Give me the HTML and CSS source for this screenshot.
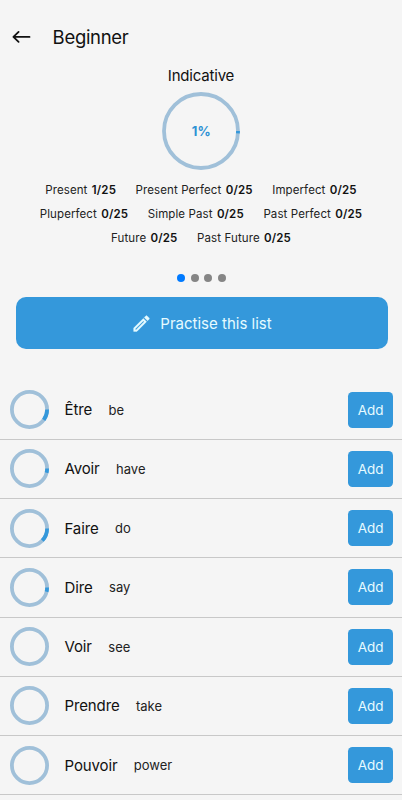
FILE: index.html
```html
<!DOCTYPE html>
<html lang="en">
<head>
<meta charset="utf-8">
<meta name="viewport" content="width=device-width, initial-scale=1">
<title>Beginner</title>
<link rel="stylesheet" href="styles.css">
</head>
<body>
<div class="screen">
  <header class="header">
    <svg class="back" viewBox="0 0 20 14" aria-hidden="true"><path d="M17.5 6.9H1.6M6.6 1.9L1.4 6.9L6.6 11.9"/></svg>
    <h1 class="title">Beginner</h1>
  </header>
  <section class="summary">
    <h2 class="mood">Indicative</h2>
    <div class="total">
      <svg class="total-ring" viewBox="0 0 78 78"><circle class="track" cx="39" cy="39" r="37"/><circle class="value" cx="39" cy="39" r="37" pathLength="100" stroke-dasharray="1 99"/></svg>
      <span class="percent">1%</span>
    </div>
    <div class="stats">
      <div class="stat-row"><span>Present <b>1/25</b></span><span>Present Perfect <b>0/25</b></span><span>Imperfect <b>0/25</b></span></div>
      <div class="stat-row"><span>Pluperfect <b>0/25</b></span><span>Simple Past <b>0/25</b></span><span>Past Perfect <b>0/25</b></span></div>
      <div class="stat-row"><span>Future <b>0/25</b></span><span>Past Future <b>0/25</b></span></div>
    </div>
    <div class="dots"><i class="dot active"></i><i class="dot"></i><i class="dot"></i><i class="dot"></i></div>
  </section>
  <button class="practise">
    <svg class="pencil" viewBox="0 0 24 24" aria-hidden="true"><path d="M14.06 9.02l.92.92L5.92 19H5v-.92l9.06-9.06M17.66 3c-.25 0-.51.1-.7.29l-1.83 1.83 3.75 3.75 1.83-1.83c.39-.39.39-1.02 0-1.41l-2.34-2.34c-.2-.2-.45-.29-.71-.29zm-3.6 3.19L3 17.25V21h3.75L17.81 9.94l-3.75-3.75z"/></svg>
    <span>Practise this list</span>
  </button>
  <ul class="verbs">
    <li class="verb"><svg class="ring" viewBox="0 0 39 39"><circle class="track" cx="19.5" cy="19.5" r="17.6"/><circle class="value" cx="19.5" cy="19.5" r="17.6" pathLength="100" stroke-dasharray="10 90"/></svg><span class="word">Être</span><span class="meaning">be</span><button class="add">Add</button></li>
    <li class="verb"><svg class="ring" viewBox="0 0 39 39"><circle class="track" cx="19.5" cy="19.5" r="17.6"/><circle class="value" cx="19.5" cy="19.5" r="17.6" pathLength="100" stroke-dasharray="4 96"/></svg><span class="word">Avoir</span><span class="meaning">have</span><button class="add">Add</button></li>
    <li class="verb"><svg class="ring" viewBox="0 0 39 39"><circle class="track" cx="19.5" cy="19.5" r="17.6"/><circle class="value" cx="19.5" cy="19.5" r="17.6" pathLength="100" stroke-dasharray="12 88"/></svg><span class="word">Faire</span><span class="meaning">do</span><button class="add">Add</button></li>
    <li class="verb"><svg class="ring" viewBox="0 0 39 39"><circle class="track" cx="19.5" cy="19.5" r="17.6"/><circle class="value" cx="19.5" cy="19.5" r="17.6" pathLength="100" stroke-dasharray="4 96"/></svg><span class="word">Dire</span><span class="meaning">say</span><button class="add">Add</button></li>
    <li class="verb"><svg class="ring" viewBox="0 0 39 39"><circle class="track" cx="19.5" cy="19.5" r="17.6"/></svg><span class="word">Voir</span><span class="meaning">see</span><button class="add">Add</button></li>
    <li class="verb"><svg class="ring" viewBox="0 0 39 39"><circle class="track" cx="19.5" cy="19.5" r="17.6"/></svg><span class="word">Prendre</span><span class="meaning">take</span><button class="add">Add</button></li>
    <li class="verb"><svg class="ring" viewBox="0 0 39 39"><circle class="track" cx="19.5" cy="19.5" r="17.6"/></svg><span class="word">Pouvoir</span><span class="meaning">power</span><button class="add">Add</button></li>
  </ul>
</div>
</body>
</html>
```
FILE: styles.css
```css
* { box-sizing: border-box; }
body {
  margin: 0;
  background: #f5f5f5;
  color: #111;
  font-family: Inter, Roboto, sans-serif;
}
.screen { height: 800px; overflow: hidden; }
svg { display: block; flex: none; }
button { border: 0; font-family: inherit; background: #3498db; color: #e6fbff; }

.header { display: flex; align-items: center; height: 60px; padding: 14px 0 0 12px; }
.back { width: 20px; height: 14px; fill: none; stroke: #111; stroke-width: 1.8; stroke-linecap: round; stroke-linejoin: round; }
.title { margin: 0 0 0 20.6px; font-size: 18.5px; font-weight: 400; line-height: 24px; letter-spacing: -0.3px; }

.summary { display: flex; flex-direction: column; align-items: center; }
.mood { margin: 6px 0 0; font-size: 15px; font-weight: 400; line-height: 20px; letter-spacing: -0.2px; }
.total { display: grid; place-items: center; margin: 6.4px 0 0 0.8px; }
.total > * { grid-area: 1 / 1; }
.total-ring { width: 78px; height: 78px; }
.percent { color: #2f92d4; font-size: 13px; font-weight: 700; letter-spacing: 0.2px; }
.track { fill: none; stroke: #a0c0d9; stroke-width: 3.8; }
.value { fill: none; stroke: #3498db; stroke-width: 3.8; }
.stats { margin-top: 7.6px; }
.stat-row { display: flex; justify-content: center; gap: 19.6px; height: 24px; font-size: 11.5px; line-height: 24px; letter-spacing: 0.1px; white-space: nowrap; color: #222; }
.stat-row b { margin-left: 1px; font-weight: 600; color: #111; letter-spacing: 0.15px; }
.dots { display: flex; gap: 5.6px; margin: 24px 0 0 1px; }
.dot { width: 8px; height: 8px; border-radius: 50%; background: #858585; }
.dot.active { background: #007aff; }

.practise {
  display: flex; align-items: center; justify-content: center; gap: 8px;
  width: 372px; height: 52.5px; margin: 15px 0 0 15.5px; padding: 0;
  border-radius: 10px; font-size: 15px;
}
.pencil { width: 21px; height: 21px; fill: #e6fbff; stroke: #e6fbff; stroke-width: 0.4; }

.verbs { margin: 31.1px 0 0; padding: 0; list-style: none; }
.verb { display: flex; align-items: center; height: 59.25px; padding: 0 9px 0 9.5px; border-bottom: 1px solid #c8c8c8; }
.ring { width: 39px; height: 39px; }
.word { margin-left: 16px; font-size: 15px; letter-spacing: -0.12px; }
.meaning { margin-left: 16.4px; font-size: 13px; color: #222; }
.add { width: 44.6px; height: 36px; margin-left: auto; padding: 0; border-radius: 4.5px; font-size: 13.5px; }
```
